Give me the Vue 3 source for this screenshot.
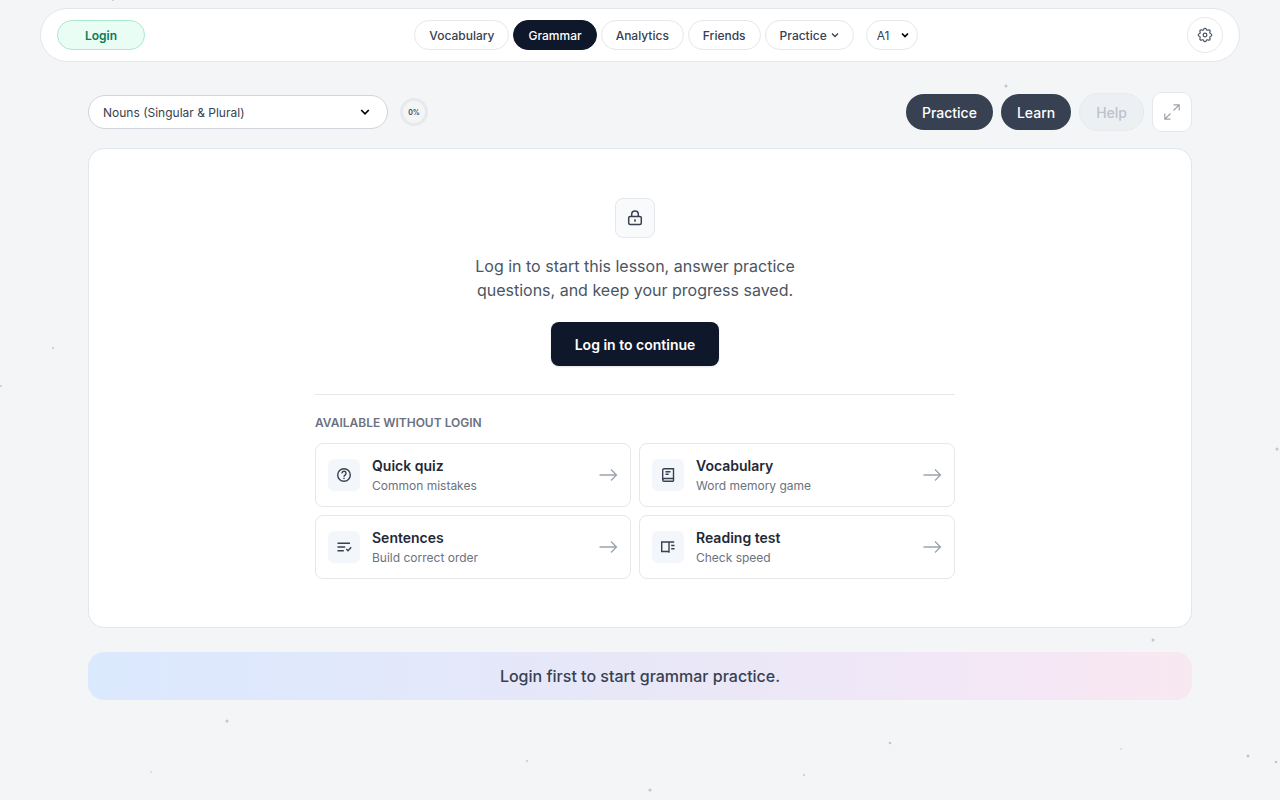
<template>
  <div class="page">
    <!-- Background specks -->
    <svg class="specks" aria-hidden="true">
      <circle
        v-for="(s, i) in specks"
        :key="i"
        :cx="s.x" :cy="s.y" :r="s.r"
        fill="#c3c6cb"
      />
    </svg>

    <header class="topbar">
      <button type="button" class="login-btn">Login</button>

      <nav class="nav">
        <a
          v-for="item in navItems"
          :key="item"
          href="#"
          :class="['nav-pill', { 'nav-pill--active': item === activeItem }]"
        >{{ item }}</a>
        <button type="button" class="nav-pill">
          Practice
          <svg width="8" height="8" viewBox="0 0 8 8" fill="none" stroke="currentColor" stroke-width="1.3">
            <path d="M1 2.5 4 5.5 7 2.5" />
          </svg>
        </button>
        <div class="select-wrap select-wrap--level">
          <select v-model="level" class="select" aria-label="Level">
            <option v-for="l in levels" :key="l">{{ l }}</option>
          </select>
          <svg class="select-arrow" width="8" height="8" viewBox="0 0 8 8" fill="none" stroke="currentColor" stroke-width="1.7">
            <path d="M1 2.5 4 5.5 7 2.5" />
          </svg>
        </div>
      </nav>

      <button type="button" class="settings-btn" aria-label="Settings">
        <svg width="18" height="18" viewBox="0 0 24 24" fill="none" stroke="currentColor" stroke-width="1.6" stroke-linecap="round" stroke-linejoin="round">
          <path d="M10.325 4.317c.426-1.756 2.924-1.756 3.35 0a1.724 1.724 0 0 0 2.573 1.066c1.543-.94 3.31.826 2.37 2.37a1.724 1.724 0 0 0 1.065 2.572c1.756.426 1.756 2.924 0 3.35a1.724 1.724 0 0 0-1.066 2.573c.94 1.543-.826 3.31-2.37 2.37a1.724 1.724 0 0 0-2.572 1.065c-.426 1.756-2.924 1.756-3.35 0a1.724 1.724 0 0 0-2.573-1.066c-1.543.94-3.31-.826-2.37-2.37a1.724 1.724 0 0 0-1.065-2.572c-1.756-.426-1.756-2.924 0-3.35a1.724 1.724 0 0 0 1.066-2.573c-.94-1.543.826-3.31 2.37-2.37 1 .608 2.296.07 2.572-1.065z" />
          <circle cx="12" cy="12" r="2.500" />
        </svg>
      </button>
    </header>

    <main class="content">
      <div class="toolbar">
        <div class="select-wrap select-wrap--lesson">
          <select v-model="lesson" class="select" aria-label="Lesson">
            <option v-for="l in lessons" :key="l">{{ l }}</option>
          </select>
          <svg class="select-arrow" width="10" height="8" viewBox="0 0 10 8" fill="none" stroke="currentColor" stroke-width="1.7">
            <path d="M1.200 2 5 5.800 8.800 2" />
          </svg>
        </div>
        <span class="progress">0%</span>

        <div class="actions">
          <button type="button" class="action-btn">Practice</button>
          <button type="button" class="action-btn">Learn</button>
          <button type="button" class="action-btn action-btn--off" disabled>Help</button>
          <button type="button" class="expand-btn" aria-label="Full screen">
            <svg width="18" height="18" viewBox="0 0 18 18" fill="none" stroke="currentColor" stroke-width="1.2">
              <path d="M10.500 7.500 16 2M10.500 1.800h5.700V7.500M7.500 10.500 2 16M7.500 16.200H1.800V10.500" />
            </svg>
          </button>
        </div>
      </div>

      <section class="panel">
        <div class="lock">
          <svg width="16" height="16" viewBox="0 0 16 16" fill="none" stroke="currentColor" stroke-width="1.5">
            <rect x="1.700" y="6.500" width="12.600" height="8" rx="1.500" />
            <path d="M4.700 6.500V4.300a3.300 3.300 0 0 1 6.600 0v2.200M8 9.300v2.400" />
          </svg>
        </div>
        <p class="intro">Log in to start this lesson, answer practice questions, and keep your progress saved.</p>
        <button type="button" class="continue-btn">Log in to continue</button>

        <div class="free">
          <h2 class="free-title">Available without login</h2>
          <div class="free-grid">
            <a v-for="card in cards" :key="card.title" href="#" class="card">
              <span class="card-icon">
                <svg width="16" height="16" viewBox="0 0 16 16" fill="none" stroke="currentColor" stroke-width="1.4">
                  <path v-for="d in card.paths" :key="d" :d="d" />
                </svg>
              </span>
              <span class="card-text">
                <span class="card-title">{{ card.title }}</span>
                <span class="card-sub">{{ card.sub }}</span>
              </span>
              <svg class="card-arrow" width="20" height="20" viewBox="0 0 20 20" fill="none" stroke="currentColor" stroke-width="1.3">
                <path d="M1.500 10h17M13 4.500l5.500 5.500-5.500 5.500" />
              </svg>
            </a>
          </div>
        </div>
      </section>

      <div class="banner">Login first to start grammar practice.</div>
    </main>
  </div>
</template>

<script setup>
import { ref } from 'vue'

const navItems = ['Vocabulary', 'Grammar', 'Analytics', 'Friends']
const activeItem = ref('Grammar')

const levels = ['A1']
const level = ref('A1')

const lessons = ['Nouns (Singular & Plural)']
const lesson = ref(lessons[0])

/* Each icon is a list of stroked paths on a 16px grid */
const cards = [
  {
    title: 'Quick quiz',
    sub: 'Common mistakes',
    paths: [
      'M14.300 8A6.300 6.300 0 1 1 1.700 8a6.300 6.300 0 0 1 12.600 0z',
      'M6 6.400a2 2 0 1 1 3.200 1.500C8.400 8.500 8 8.800 8 9.700M8 10.700v1.300',
    ],
  },
  {
    title: 'Vocabulary',
    sub: 'Word memory game',
    paths: [
      'M13.500 11.500V1.800H4a1.300 1.300 0 0 0-1.300 1.300v9.800A1.300 1.300 0 0 0 4 14.200h9.500',
      'M2.700 12.900c0-.8.600-1.400 1.300-1.400h9.500v2.700M5.500 4.800h5M5.500 7.200h3.200',
    ],
  },
  {
    title: 'Sentences',
    sub: 'Build correct order',
    paths: ['M1.500 4.200h12.500M1.500 8h7.700M1.500 11.800h6.300', 'M10.300 10l1.700 1.800 3.200-3.600'],
  },
  {
    title: 'Reading test',
    sub: 'Check speed',
    paths: [
      'M9 3H1.700v9.500H9M9 2.300v11.500M9 3h5.200',
      'M11.200 6.500h3.300M11.200 9.700h3.300',
    ],
  },
]

const specks = [
  { x: 113, y: 0, r: 1 },
  { x: 1006, y: 86, r: 1.5 },
  { x: 53, y: 348, r: 1 },
  { x: 1, y: 386, r: 1 },
  { x: 1277, y: 449, r: 1.5 },
  { x: 1153, y: 640, r: 1.5 },
  { x: 227, y: 721, r: 1.5 },
  { x: 527, y: 761, r: 1 },
  { x: 151, y: 772, r: 0.8 },
  { x: 650, y: 790, r: 1.6 },
  { x: 890, y: 743, r: 1.3 },
  { x: 804, y: 775, r: 1 },
  { x: 1121, y: 749, r: 0.8 },
  { x: 1248, y: 756, r: 1.5 },
  { x: 1276, y: 762, r: 1.3 },
]
</script>

<style>
body {
  background: #f3f5f7;
}
</style>

<style scoped>
.page {
  position: relative;
  box-sizing: border-box;
  min-height: 100vh;
  padding: 8px 40px;
  background: #f3f5f7;
  color: #1f2937;
  font-family: Inter, 'Liberation Sans', sans-serif;
}

.page * {
  box-sizing: border-box;
}

button,
select {
  font-family: inherit;
}

a {
  text-decoration: none;
}

.specks {
  position: absolute;
  inset: 0;
  width: 100%;
  height: 100%;
  pointer-events: none;
}

/* Top bar */
.topbar {
  position: relative;
  display: flex;
  align-items: center;
  justify-content: space-between;
  height: 54px;
  padding: 0 16px;
  background: #fff;
  border: 1px solid #e3e6eb;
  border-radius: 27px;
}

.login-btn {
  width: 88px;
  height: 30px;
  border: 1px solid #a7ead0;
  border-radius: 15px;
  background: #eafdf5;
  color: #0b7a55;
  font-size: 12px;
  font-weight: 600;
}

.nav {
  display: flex;
  align-items: center;
  gap: 4px;
}

.nav-pill {
  display: flex;
  align-items: center;
  gap: 4px;
  height: 30px;
  padding: 0 14px;
  border: 1px solid #e5e7eb;
  border-radius: 15px;
  background: #fff;
  color: #374151;
  font-size: 12px;
  font-weight: 500;
}

.nav-pill--active {
  border-color: #0f172a;
  background: #0f172a;
  color: #fff;
}

/* Selects with their own chevron */
.select-wrap {
  position: relative;
}

.select {
  width: 100%;
  border: 1px solid #e5e7eb;
  border-radius: 17px;
  background: #fff;
  color: #374151;
  font-size: 12px;
  appearance: none;
}

.select-arrow {
  position: absolute;
  top: 50%;
  right: 9px;
  margin-top: -4px;
  color: #000;
  pointer-events: none;
}

.select-wrap--level {
  width: 52px;
  margin-left: 8px;
}

.select-wrap--level .select {
  height: 30px;
  padding: 0 10px;
}

.select-wrap--lesson {
  display: flex;
  width: 300px;
}

.select-wrap--lesson .select {
  height: 34px;
  padding: 0 32px 0 14px;
  border-color: #d1d5db;
}

.select-wrap--lesson .select-arrow {
  right: 18px;
}

.settings-btn {
  display: flex;
  align-items: center;
  justify-content: center;
  width: 36px;
  height: 36px;
  padding: 0;
  border: 1px solid #e5e7eb;
  border-radius: 50%;
  background: #fff;
  color: #4b5563;
}

/* Lesson toolbar */
.content {
  position: relative;
  margin: 30px 48px 0;
}

.toolbar {
  display: flex;
  align-items: center;
  gap: 12px;
  margin-bottom: 16px;
}

.progress {
  display: flex;
  align-items: center;
  justify-content: center;
  width: 28px;
  height: 28px;
  border: 3px solid #e7e9ec;
  border-radius: 50%;
  color: #374151;
  font-size: 7px;
  font-weight: 600;
}

.actions {
  display: flex;
  align-items: center;
  gap: 8px;
  margin-left: auto;
}

.action-btn {
  height: 36px;
  padding: 0 16px;
  border: 0;
  border-radius: 18px;
  background: #374151;
  color: #fff;
  font-size: 14px;
  font-weight: 500;
}

.action-btn--off {
  height: 38px;
  border: 1px solid #e7eaee;
  border-radius: 19px;
  background: #edf0f3;
  color: #bcc2cc;
}

.expand-btn {
  display: flex;
  align-items: center;
  justify-content: center;
  width: 40px;
  height: 40px;
  padding: 0;
  border: 1px solid #e5e7eb;
  border-radius: 10px;
  background: #fff;
  color: #9ca3af;
}

.panel {
  display: flex;
  flex-direction: column;
  align-items: center;
  padding: 49px 58px 48px 48px;
  border: 1px solid #e3e6eb;
  border-radius: 16px;
  background: #fff;
}

.lock {
  display: flex;
  align-items: center;
  justify-content: center;
  width: 40px;
  height: 40px;
  border: 1px solid #e5e7eb;
  border-radius: 8px;
  background: #f8fafc;
  color: #374151;
}

.intro {
  max-width: 340px;
  margin: 16px 0 20px;
  color: #4b5563;
  font-size: 16px;
  line-height: 24px;
  text-align: center;
}

.continue-btn {
  height: 44px;
  padding: 0 24px;
  border: 0;
  border-radius: 8px;
  background: #0f172a;
  color: #fff;
  font-size: 14px;
  font-weight: 600;
  box-shadow: 0 1px 2px rgba(15, 23, 42, 0.12);
}

.free {
  width: 100%;
  max-width: 640px;
  margin-top: 28px;
  padding-top: 20px;
  border-top: 1px solid #e5e7eb;
}

.free-title {
  margin: 0 0 12px;
  color: #6b7280;
  font-size: 12px;
  font-weight: 600;
  line-height: 16px;
  text-transform: uppercase;
}

.free-grid {
  display: grid;
  grid-template-columns: 1fr 1fr;
  gap: 8px;
}

.card {
  display: flex;
  align-items: center;
  gap: 12px;
  height: 64px;
  padding: 0 12px;
  border: 1px solid #e5e7eb;
  border-radius: 8px;
  background: #fff;
}

.card-icon {
  display: flex;
  align-items: center;
  justify-content: center;
  width: 32px;
  height: 32px;
  border-radius: 6px;
  background: #f3f6fa;
  color: #374151;
}

.card-text {
  display: flex;
  flex: 1;
  flex-direction: column;
  gap: 2px;
}

.card-title {
  color: #1f2937;
  font-size: 14px;
  font-weight: 600;
  line-height: 20px;
}

.card-sub {
  color: #6b7280;
  font-size: 12px;
  line-height: 16px;
}

.card-arrow {
  color: #9ca3af;
}

/* Status banner */
.banner {
  margin-top: 24px;
  padding: 12px 16px;
  border-radius: 16px;
  background: linear-gradient(90deg, #dbe9fe, #e8e7f8 50%, #f5e7f6 85%, #f8e8f0);
  color: #374151;
  font-size: 16px;
  font-weight: 500;
  line-height: 24px;
  text-align: center;
}
</style>
